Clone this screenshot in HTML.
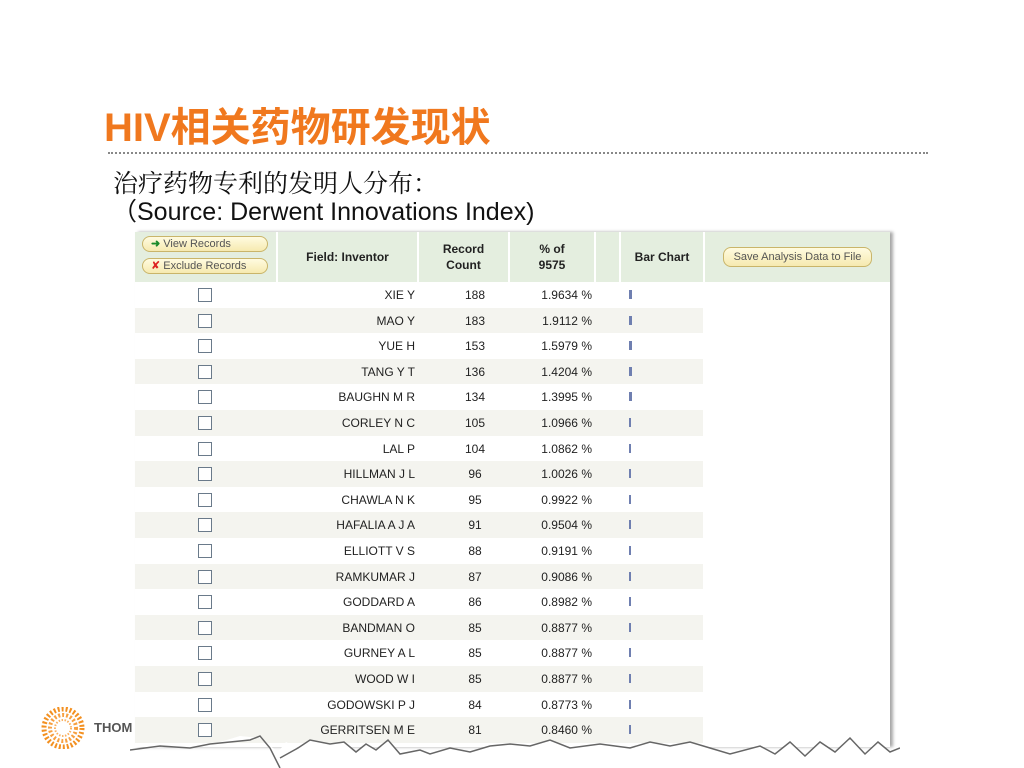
<!DOCTYPE html>
<html><head><meta charset="utf-8"><style>
body{margin:0;width:1024px;height:768px;background:#fff;position:relative;overflow:hidden;font-family:"Liberation Sans","Noto Sans CJK SC",sans-serif}
.a{position:absolute;white-space:nowrap}
#title{left:104px;top:103px;font-size:40px;font-weight:bold;color:#f0781e;line-height:50px}
#dots{left:108px;top:152px;width:820px;border-top:2px dotted #888}
#sub{left:113px;top:170px;font-size:25px;line-height:30px;font-family:"Liberation Serif","Noto Serif CJK SC",serif;color:#111}
#src{left:112px;top:197px;font-size:25px;line-height:30px;color:#111}
#tbl{left:135px;top:232px;width:755px;height:515px;background:#fff;box-shadow:3px 0 3px rgba(0,0,0,.35);overflow:hidden}
.hd{position:absolute;top:0;height:50px;background:#e4eedf;font-size:12px;font-weight:bold;color:#222;font-family:"Liberation Sans Narrow","Liberation Sans",sans-serif;display:flex;align-items:center;justify-content:center;text-align:center;line-height:16px}
.btn{position:absolute;left:7px;width:116px;height:14px;border:1px solid #c9b56a;border-radius:8px;background:linear-gradient(#fffbe0,#f6eab0);font-size:11px;color:#555;line-height:14px;padding-left:8px;box-sizing:content-box}
.row{position:absolute;left:0;width:568px;height:25.6px;font-size:12px;color:#222;font-family:"Liberation Sans Narrow","Liberation Sans",sans-serif}
.row.g{background:#f4f4ef}
.row span{position:absolute;top:6px}
.cb{position:absolute;left:63px;top:6px;width:12px;height:12px;border:1px solid #6a7a8a;background:#fff}
.bar{position:absolute;left:494px;top:8px;width:3px;height:9px;background:#6f7fb0}
</style></head><body>
<div class="a" id="title">HIV相关药物研发现状</div>
<div class="a" id="dots"></div>
<div class="a" id="sub">治疗药物专利的发明人分布：</div>
<div class="a" id="src">（Source: Derwent Innovations Index)</div>
<svg class="a" style="left:40px;top:707px" width="46" height="42" viewBox="0 0 46 42">
<circle cx="23" cy="21" r="19" fill="none" stroke="#f39020" stroke-width="5" stroke-dasharray="2 2"/>
<circle cx="23" cy="21" r="13" fill="none" stroke="#f7a040" stroke-width="4" stroke-dasharray="2 2"/>
<circle cx="23" cy="21" r="8" fill="none" stroke="#f9b060" stroke-width="2" stroke-dasharray="1.5 1.5"/>
</svg>
<div class="a" style="left:94px;top:720px;font-size:13px;font-weight:bold;color:#555">THOM</div>
<div class="a" id="tbl">
<div class="hd" style="left:0;width:141px"></div>
<div class="btn" style="top:4px"><span style="color:#1a8a2a;font-weight:bold">➜</span> View Records</div>
<div class="btn" style="top:26px"><span style="color:#d22">✘</span> Exclude Records</div>
<div class="hd" style="left:143px;width:139px">Field: Inventor</div>
<div class="hd" style="left:284px;width:89px">Record<br>Count</div>
<div class="hd" style="left:375px;width:84px">% of<br>9575</div>
<div class="hd" style="left:461px;width:23px"></div>
<div class="hd" style="left:486px;width:82px">Bar Chart</div>
<div class="hd" style="left:570px;width:185px"><div style="border:1px solid #c9b56a;border-radius:8px;background:linear-gradient(#fffbe0,#f6eab0);font-weight:normal;font-size:11px;color:#555;padding:1px 10px">Save Analysis Data to File</div></div>
<div id="rows"></div>
</div>
<svg class="a" style="left:130px;top:728px" width="770" height="40" viewBox="0 0 770 40">
<path d="M0 22 L30 18 L60 20 L80 16 L100 14 L120 12 L130 8 L140 20 L150 40 L770 40 L770 20 L760 24 L748 14 L735 26 L720 10 L705 24 L690 14 L675 28 L660 14 L645 26 L630 18 L600 26 L580 20 L560 14 L540 18 L520 14 L500 20 L470 16 L440 20 L420 12 L400 18 L380 16 L360 18 L340 24 L320 20 L300 26 L290 22 L270 26 L258 12 L246 22 L236 16 L226 24 L214 14 L200 16 L180 12 L168 20 L156 14 L148 24 L130 10 L110 8 L90 14 L70 16 Z" fill="#fff"/>
<path d="M0 22 L30 18 L60 20 L80 16 L100 14 L120 12 L130 8 L140 20 L150 40 M150 30 L168 20 L180 12 L200 16 L214 14 L226 24 L236 16 L246 22 L258 12 L270 26 L290 22 L300 26 L320 20 L340 24 L360 18 L380 16 L400 18 L420 12 L440 20 L470 16 L500 20 L520 14 L540 18 L560 14 L580 20 L600 26 L630 18 L645 26 L660 14 L675 28 L690 14 L705 24 L720 10 L735 26 L748 14 L760 24 L770 20" fill="none" stroke="#666" stroke-width="1.5"/>
</svg>
<script>
var d=[["XIE Y",188,"1.9634"],["MAO Y",183,"1.9112"],["YUE H",153,"1.5979"],["TANG Y T",136,"1.4204"],["BAUGHN M R",134,"1.3995"],["CORLEY N C",105,"1.0966"],["LAL P",104,"1.0862"],["HILLMAN J L",96,"1.0026"],["CHAWLA N K",95,"0.9922"],["HAFALIA A J A",91,"0.9504"],["ELLIOTT V S",88,"0.9191"],["RAMKUMAR J",87,"0.9086"],["GODDARD A",86,"0.8982"],["BANDMAN O",85,"0.8877"],["GURNEY A L",85,"0.8877"],["WOOD W I",85,"0.8877"],["GODOWSKI P J",84,"0.8773"],["GERRITSEN M E",81,"0.8460"]];
var h="";d.forEach(function(r,i){h+='<div class="row'+(i%2?' g':'')+'" style="top:'+(50+i*25.6)+'px"><div class="cb"></div><span style="right:288px">'+r[0]+'</span><span style="left:284px;width:112px;text-align:center">'+r[1]+'</span><span style="right:111px">'+r[2]+' %</span><div class="bar" style="width:'+(i<5?3:2)+'px"></div></div>';});
document.getElementById("rows").innerHTML=h;
</script>
</body></html>
